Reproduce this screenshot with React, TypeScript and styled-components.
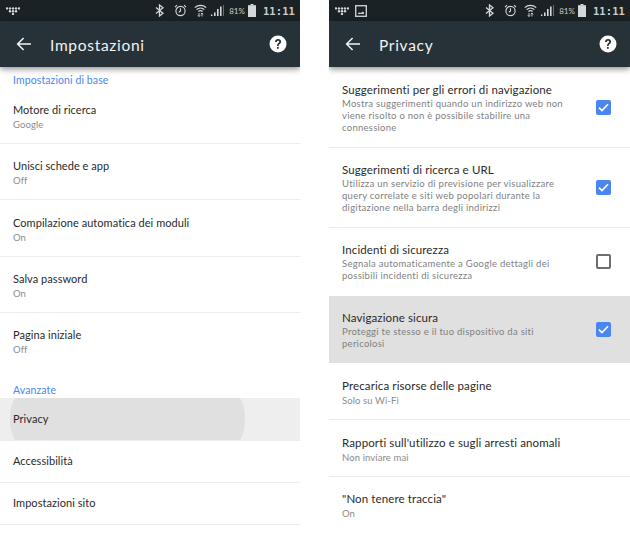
import React from 'react';
import styled, { createGlobalStyle } from 'styled-components';

const Global = createGlobalStyle`
  html, body { margin: 0; padding: 0; background: #fff; }
  body { width: 630px; height: 533px; overflow: hidden; font-family: "Lato", "Liberation Sans", sans-serif; }
`;
const Page = styled.div`
  width: 630px; height: 533px; display: flex; justify-content: space-between; overflow: hidden;
`;
const Phone = styled.section<{ $w: number }>`
  width: ${p => p.$w}px; height: 533px; display: flex; flex-direction: column; background: #fff; overflow: hidden;
`;
const StatusBar = styled.div`
  height: 21px; flex: none; background: #1a2226; display: flex; align-items: center; padding: 0 5px 0 6px; gap: 7px; color: #d5d8da;
`;
const Spacer = styled.div`flex: 1;`;
const Pct = styled.span`font-size: 8px; color: #c9cdd0; margin-left: -2px; margin-right: -4px;`;
const Clock = styled.span`font-size: 10.5px; font-weight: 700; color: #c9cdd0; font-family: "DejaVu Sans Mono", monospace; letter-spacing: .1px;`;
const Header = styled.header`
  height: 46px; flex: none; background: #263238; display: flex; align-items: center; padding: 0 13px 0 16px; color: #fff;
  box-shadow: 0 2px 6px rgba(0,0,0,.45); position: relative; z-index: 1;
`;
const Title = styled.h1`
  margin: 2px 0 0 18px; font-size: 15.5px; font-weight: 400; letter-spacing: .7px; flex: 1; color: #f2f3f4;
`;
const LeftList = styled.div`display: flex; flex-direction: column; padding-top: 7px;`;
const SectionLabel = styled.div<{ $top?: number }>`
  height: 14px; line-height: 14px; font-size: 10.5px; color: #4a86f0; padding-left: 13px; margin: ${p => p.$top ?? -1}px 0 1px; letter-spacing: .1px;
`;
const Row = styled.div<{ $h: number; $active?: boolean; $flat?: boolean; $single?: boolean }>`
  height: ${p => p.$h}px; box-sizing: border-box; border-bottom: 1px solid ${p => p.$flat ? 'transparent' : '#ececec'};
  padding: ${p => p.$single ? '0 0 2px 13px' : '2px 0 0 13px'};
  display: flex; flex-direction: column; justify-content: center; position: relative; overflow: hidden;
  background: ${p => p.$active ? '#eeeeee' : 'transparent'};
`;
const Ripple = styled.div`
  position: absolute; left: 10px; top: -2px; bottom: -2px; width: 235px; border-radius: 9px / 50%; background: #e0e0e0;
`;
const RowTitle = styled.div`
  font-size: 11.5px; line-height: 15px; color: #2a2a2a; position: relative; letter-spacing: .12px;
`;
const LeftTitle = styled(RowTitle)`font-size: 11px; letter-spacing: .05px;`;
const RowSub = styled.div`
  font-size: 9.5px; line-height: 12px; color: #8b8b8b; position: relative; margin-top: 2px; letter-spacing: .1px;
`;
const CheckRow = styled.div<{ $h: number; $hl?: boolean; $flat?: boolean }>`
  height: ${p => p.$h}px; box-sizing: border-box; padding: 2px 19px 0 13px; display: flex; align-items: center;
  border-bottom: 1px solid ${p => p.$hl || p.$flat ? 'transparent' : '#ececec'}; background: ${p => p.$hl ? '#e0e0e0' : 'transparent'};
`;
const CheckText = styled.div`flex: 1; min-width: 0; padding-right: 22px;`;
const CheckSub = styled(RowSub)`color: #7f7f7f; margin-top: 1px; letter-spacing: .27px;`;
const Box = styled.div<{ $on?: boolean }>`
  width: 15px; height: 15px; flex: none; box-sizing: border-box; border-radius: 2px; margin-top: -1px;
  background: ${p => p.$on ? '#4a86f0' : 'transparent'}; border: ${p => p.$on ? 'none' : '2px solid #6e6e6e'};
  display: flex; align-items: center; justify-content: center;
`;

const Carrier = () => (
  <svg width="14" height="8" viewBox="0 0 14 8" fill="#d5d8da">
    {[1,4,7,10,13].map(x => <circle key={x} cx={x} cy="1.4" r="1.2" />)}
    {[4,7,10].map(x => <circle key={x} cx={x} cy="4.2" r="1.2" />)}
    <circle cx="7" cy="7" r="1.2" />
  </svg>
);
const Thumb = () => (
  <svg width="12" height="12" viewBox="0 0 12 12" style={{ marginLeft: -1 }}>
    <rect x=".7" y=".7" width="10.6" height="10.6" fill="none" stroke="#c9cdd0" strokeWidth="1.4" />
    <path d="M3 9h6V7.5L7.5 6.5 6 8 4.5 7.5 3 8z" fill="#c9cdd0" />
  </svg>
);
const BT = () => (
  <svg width="9" height="13" viewBox="0 0 9 13" fill="none" stroke="#d5d8da" strokeWidth="1.3">
    <path d="M1 3.5l7 5.7L4.5 12V1L8 3.8 1 9.5" />
  </svg>
);
const Alarm = () => (
  <svg width="13" height="13" viewBox="0 0 13 13" fill="none" stroke="#d5d8da" strokeWidth="1.1" style={{ marginLeft: 3 }}>
    <circle cx="6.5" cy="7" r="4.6" />
    <path d="M6.5 4.3V7L4.8 8.2M1 3.2L3 1.2M12 3.2L10 1.2" />
  </svg>
);
const Wifi = () => (
  <svg width="13" height="13" viewBox="0 0 13 13" fill="none" stroke="#d5d8da" strokeWidth="1.2">
    <path d="M.8 3.6C4 .6 9 .6 12.2 3.6M2.6 5.6c2.2-2 5.6-2 7.8 0M4.4 7.5c1.2-1 3-1 4.2 0" />
    <path d="M5 9v3.4M3.9 11.3L5 12.5l1.1-1.2M8 12.5V9M6.9 10.2L8 9l1.1 1.2" strokeWidth=".9" />
  </svg>
);
const Signal = () => (
  <svg width="13" height="13" viewBox="0 0 13 13" fill="#d5d8da" style={{ marginLeft: -3 }}>
    <rect x="0" y="10.5" width="1.4" height="1.5" />
    <rect x="3" y="8.5" width="1.6" height="3.5" />
    <rect x="6" y="5" width="1.6" height="7" />
    <rect x="9" y="2.5" width="1.6" height="9.5" />
    <rect x="12" y="1" width=".9" height="11" fill="#6f7679" />
  </svg>
);
const Battery = () => (
  <svg width="8" height="13" viewBox="0 0 8 13" fill="#d5d8da">
    <rect x="2.5" y="0" width="3" height="1.4" />
    <rect x="0" y="1.2" width="8" height="11.8" />
  </svg>
);
const Back = () => (
  <svg width="16" height="16" viewBox="0 0 16 16" fill="none" stroke="#f2f3f4" strokeWidth="1.5">
    <path d="M15 8H1.6M7.6 2L1.6 8l6 6" />
  </svg>
);
const Help = () => (
  <svg width="18" height="18" viewBox="0 0 18 18">
    <circle cx="9" cy="9" r="8.5" fill="#fff" />
    <path d="M6 7c0-1.9 1.3-3 3.1-3s3 1.1 3 2.7c0 2.2-2.5 2.2-2.5 4.4H8c0-3 2.2-3 2.2-4.4 0-.6-.5-1-1.1-1-.7 0-1.2.5-1.2 1.3z" fill="#263238" />
    <rect x="8" y="12" width="1.7" height="1.8" fill="#263238" />
  </svg>
);
const Tick = () => (
  <svg width="11" height="9" viewBox="0 0 11 9" fill="none" stroke="#fff" strokeWidth="1.6">
    <path d="M1 4.6l3 3L10 1.2" />
  </svg>
);

const Status = ({ thumb }: { thumb?: boolean }) => (
  <StatusBar>
    <Carrier />
    {thumb && <Thumb />}
    <Spacer />
    <BT /><Alarm /><Wifi /><Signal />
    <Pct>81%</Pct><Battery />
    <Clock>11:11</Clock>
  </StatusBar>
);

const leftA = [
  { t: 'Motore di ricerca', s: 'Google', h: 56 },
  { t: 'Unisci schede e app', s: 'Off', h: 56 },
  { t: 'Compilazione automatica dei moduli', s: 'On', h: 57 },
  { t: 'Salva password', s: 'On', h: 56 },
  { t: 'Pagina iniziale', s: 'Off', h: 56, flat: true },
];
const right = [
  { t: 'Suggerimenti per gli errori di navigazione', s: ['Mostra suggerimenti quando un indirizzo web non', 'viene risolto o non è possibile stabilire una', 'connessione'], on: true, h: 81 },
  { t: 'Suggerimenti di ricerca e URL', s: ['Utilizza un servizio di previsione per visualizzare', 'query correlate e siti web popolari durante la', 'digitazione nella barra degli indirizzi'], on: true, h: 80 },
  { t: 'Incidenti di sicurezza', s: ['Segnala automaticamente a Google dettagli dei', 'possibili incidenti di sicurezza'], on: false, h: 68, flat: true },
  { t: 'Navigazione sicura', s: ['Proteggi te stesso e il tuo dispositivo da siti', 'pericolosi'], on: true, h: 68, hl: true },
];
const rightB = [
  { t: 'Precarica risorse delle pagine', s: 'Solo su Wi-Fi', h: 57 },
  { t: "Rapporti sull'utilizzo e sugli arresti anomali", s: 'Non inviare mai', h: 57 },
  { t: '"Non tenere traccia"', s: 'On', h: 56, flat: true },
];

export default function App() {
  return (
    <Page>
      <Global />
      <Phone $w={300}>
        <Status />
        <Header><Back /><Title>Impostazioni</Title><Help /></Header>
        <LeftList>
          <SectionLabel>Impostazioni di base</SectionLabel>
          {leftA.map(r => (
            <Row key={r.t} $h={r.h} $flat={r.flat}><LeftTitle>{r.t}</LeftTitle><RowSub>{r.s}</RowSub></Row>
          ))}
          <SectionLabel $top={14}>Avanzate</SectionLabel>
          <Row $h={43} $active $single><Ripple /><LeftTitle>Privacy</LeftTitle></Row>
          <Row $h={42} $single><LeftTitle>Accessibilità</LeftTitle></Row>
          <Row $h={42} $single><LeftTitle>Impostazioni sito</LeftTitle></Row>
        </LeftList>
      </Phone>
      <Phone $w={301}>
        <Status thumb />
        <Header><Back /><Title>Privacy</Title><Help /></Header>
        {right.map(r => (
          <CheckRow key={r.t} $h={r.h} $hl={r.hl} $flat={r.flat}>
            <CheckText>
              <RowTitle>{r.t}</RowTitle>
              <CheckSub>{r.s.map(l => <div key={l}>{l}</div>)}</CheckSub>
            </CheckText>
            <Box $on={r.on}>{r.on && <Tick />}</Box>
          </CheckRow>
        ))}
        {rightB.map(r => (
          <Row key={r.t} $h={r.h} $flat={r.flat}><RowTitle>{r.t}</RowTitle><RowSub>{r.s}</RowSub></Row>
        ))}
      </Phone>
    </Page>
  );
}
